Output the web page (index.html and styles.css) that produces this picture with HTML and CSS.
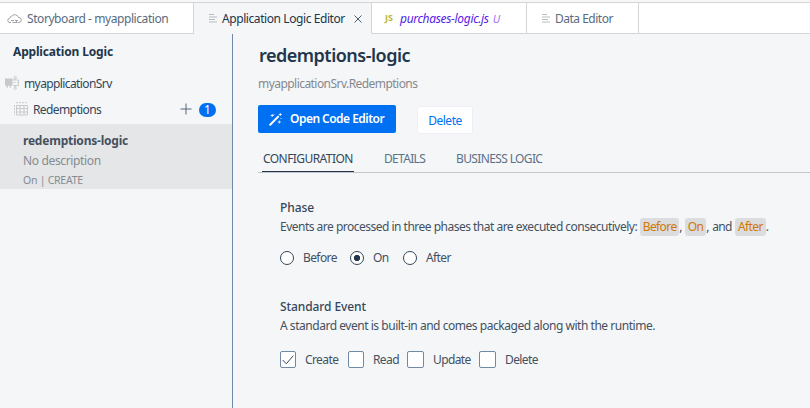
FILE: index.html
```html
<!DOCTYPE html>
<html lang="en">
<head>
<meta charset="utf-8">
<title>Application Logic Editor</title>
<link rel="stylesheet" href="styles.css">
</head>
<body>
<nav class="tabs">
  <div class="tab tab-story">
    <svg class="ico-cloud" width="15" height="11" viewBox="0 0 15 11"><path d="M4 8.500H3A2.100 2.100 0 0 1 2.800 4.300 2.200 2.200 0 0 1 4.700 2.200 3.900 3.900 0 0 1 11.500 3.500 2.500 2.500 0 0 1 12 8.500H11"/><path d="M4 6.500h3M5.500 8.500h5M8 6.500h3M9.500 6.500v2"/></svg>
    <span class="t-story">Storyboard - myapplication</span>
  </div>
  <div class="tab tab-active">
    <svg class="ico-lines" width="8" height="9" viewBox="0 0 8 9"><path d="M0 .5h5M0 3h8M0 5.500h6M0 8h8"/></svg>
    <span class="t-app">Application Logic Editor</span>
    <svg class="ico-close" width="8" height="8" viewBox="0 0 8 8"><path d="M.5.5l7 7M7.500.5l-7 7"/></svg>
  </div>
  <div class="tab tab-file">
    <span class="js">JS</span>
    <span class="t-file">purchases-logic.js</span>
    <span class="status">U</span>
  </div>
  <div class="tab tab-data">
    <svg class="ico-lines" width="8" height="9" viewBox="0 0 8 9"><path d="M0 .5h5M0 3h8M0 5.500h6M0 8h8"/></svg>
    <span class="t-data">Data Editor</span>
  </div>
  <div class="tab-rest"></div>
</nav>
<div class="workspace">
  <aside class="sidebar">
    <h2 class="side-title"><span>Application Logic</span></h2>
    <div class="row service">
      <svg class="ico-srv" width="15" height="14" viewBox="0 0 15 14"><path class="fill" d="M0 2.500h7.500v7H6v2H4.500v-2H3v2H1.500v-2H0z"/><circle cx="10.200" cy="1.700" r="1.200"/><circle cx="10.200" cy="12.200" r="1.200"/><path d="M8 4h5.500v2M8 9.500h5.500V7.500M8.500 6.500h2M10.200 3v1M10.200 9.500V11M12 6.800h2.500"/></svg>
      <span class="t-srv">myapplicationSrv</span>
    </div>
    <div class="row entity">
      <svg class="ico-grid" width="14" height="14" viewBox="0 0 14 14"><path d="M2.500 3.500h11v9.500h-11zM6 3.500V13M10 3.500V13M2.500 6.500h11M2.500 10h11"/><path class="dash" d="M2 .7h11M.5 3v10"/></svg>
      <span class="t-ent">Redemptions</span>
      <svg class="ico-plus" width="12" height="12" viewBox="0 0 12 12"><path d="M6 .5v11M.5 6h11"/></svg>
      <span class="badge">1</span>
    </div>
    <div class="item">
      <div class="item-name"><span>redemptions-logic</span></div>
      <div class="item-desc"><span>No description</span></div>
      <div class="item-meta"><span>On | CREATE</span></div>
    </div>
  </aside>
  <main class="content">
    <h1 class="title"><span>redemptions-logic</span></h1>
    <div class="path"><span>myapplicationSrv.Redemptions</span></div>
    <div class="actions">
      <button class="open"><svg class="ico-wand" width="14" height="13" viewBox="0 0 14 13"><path class="stick" d="M1.200 11.800L9.200 3.600"/><path d="M3.200 1v3M1.700 2.500h3M11.300 0v3M9.800 1.500h3M10.300 7.500v3M8.800 9h3M5 1.200v1M12 5v1"/></svg><span>Open Code Editor</span></button>
      <button class="delete"><span>Delete</span></button>
    </div>
    <div class="subtabs">
      <div class="subtab selected"><span>CONFIGURATION</span></div>
      <div class="subtab s-det"><span>DETAILS</span></div>
      <div class="subtab s-bus"><span>BUSINESS LOGIC</span></div>
    </div>
    <section class="phase">
      <h3>Phase</h3>
      <p><span class="p-phase">Events are processed in three phases that are executed consecutively:</span><code class="c-before">Before</code><span class="sep">,</span><code class="c-on">On</code><span class="sep">,</span><span class="and">and</span><code class="c-after">After</code><span class="sep">.</span></p>
      <div class="options">
        <label class="o-before"><i class="radio"></i><span>Before</span></label>
        <label class="o-on"><i class="radio checked"></i><span>On</span></label>
        <label class="o-after"><i class="radio"></i><span>After</span></label>
      </div>
    </section>
    <section class="event">
      <h3>Standard Event</h3>
      <p><span class="p-event">A standard event is built-in and comes packaged along with the runtime.</span></p>
      <div class="options">
        <label class="o-create"><i class="box"><svg width="12" height="10" viewBox="0 0 12 10"><path d="M.7 5l3.600 3.800L11.300.7"/></svg></i><span>Create</span></label>
        <label class="o-read"><i class="box"></i><span>Read</span></label>
        <label class="o-update"><i class="box"></i><span>Update</span></label>
        <label class="o-delete"><i class="box"></i><span>Delete</span></label>
      </div>
    </section>
  </main>
</div>
</body>
</html>
```
FILE: styles.css
```css
* { box-sizing: border-box; }
body { margin: 0; width: 810px; height: 408px; overflow: hidden; background: #f4f6f8; font: 12px/16px "Noto Sans", sans-serif; color: #44515f; }
h1, h2, h3, p { margin: 0; }
svg { fill: none; flex: none; }
span { white-space: nowrap; }
.tabs { display: flex; height: 34px; padding-top: 2px; background: #f7f7f8; }
.tab, .tab-rest { display: flex; align-items: center; height: 32px; padding-top: 2px; border: solid #d4d5d6; border-width: 1px 1px 1px 0; background: #fff; color: #586b80; }
.tab-rest { flex: 1; border-right: 0; }
.tab-story { width: 194px; padding-left: 7px; }
.tab-active { width: 178px; padding-left: 15px; background: #f4f6f8; border-bottom-color: #f4f6f8; color: #223548; }
.tab-file { width: 155px; padding-left: 13px; }
.tab-data { width: 112px; padding-left: 15px; }
.t-story { letter-spacing: -.43px; }
.t-app { letter-spacing: -.42px; }
.t-data { letter-spacing: -.5px; }
.ico-cloud { stroke: #a2a2a2; margin-right: 5px; }
.ico-lines { stroke: #b9bcc0; margin-right: 5px; }
.tab .ico-lines { margin-top: -2px; }
.ico-close { stroke: #4e5d6d; margin-left: auto; margin-right: 9px; margin-top: -1px; }
.js { width: 15px; margin-top: -2px; font: bold 9px/16px "Noto Sans", sans-serif; color: #b7b73b; }
.t-file { font-style: italic; letter-spacing: -.32px; color: #5722e8; }
.status { margin-left: 4px; margin-top: -1px; font-size: 11px; font-style: italic; color: #9a72f5; }
.workspace { display: flex; height: 374px; }
.sidebar { width: 233px; border-right: 1px solid #7089a5; }
.side-title { height: 37px; padding: 10px 0 0 13px; font: bold 12px/16px "Noto Sans", sans-serif; letter-spacing: -.17px; color: #22354a; }
.row { display: flex; align-items: center; height: 26px; color: #32465a; }
.service { padding-left: 5px; }
.t-srv, .t-ent { letter-spacing: -.6px; }
.ico-srv { stroke: #c9caca; margin-right: 4px; margin-top: -3px; }
.ico-srv .fill { fill: #c7c8c8; stroke: none; }
.entity { height: 27px; padding: 0 0 2px 14px; }
.ico-grid { stroke: #c9caca; margin-right: 5px; margin-top: -1px; }
.dash { stroke-dasharray: 2 1; }
.ico-plus { stroke: #55687a; margin-left: auto; margin-right: 7px; margin-top: -2px; }
.badge { width: 17px; height: 14px; border-radius: 7px; background: #0070f2; color: #fff; font-size: 12px; line-height: 14px; text-align: center; margin-right: 16px; }
.item { height: 65px; padding: 9px 0 0 23px; background: #e5e6e7; }
.item-name { height: 20px; font-weight: bold; letter-spacing: -.22px; color: #46515f; }
.item-desc { height: 20px; letter-spacing: -.35px; color: #858b92; }
.item-meta { height: 16px; font-size: 10.5px; line-height: 15px; letter-spacing: -.25px; color: #858b92; }
.content { flex: 1; padding-left: 25px; }
.title { height: 42px; padding: 9px 0 0 1px; font: 600 18px/24px "Noto Sans", sans-serif; letter-spacing: -.5px; color: #22354a; }
.path { height: 29px; letter-spacing: -.55px; color: #85898e; }
.actions { display: flex; align-items: center; gap: 22px; height: 28px; }
button { display: flex; align-items: center; border: 0; font: 12px/16px "Noto Sans", sans-serif; padding: 0; }
.open { width: 138px; height: 28px; padding-left: 11px; border-radius: 2px; background: #0070f2; color: #fff; font-weight: 600; letter-spacing: -.53px; }
.ico-wand { stroke: #fff; stroke-width: .8; margin-right: 7px; }
.stick { stroke-width: 2; stroke-linecap: round; }
.delete { width: 54px; height: 26px; padding-top: 2px; margin-top: 1px; justify-content: center; background: #fff; color: #0070f2; letter-spacing: -.5px; box-shadow: 0 0 1px #ccd3da; }
.subtabs { display: flex; height: 40px; padding-left: 4px; border-bottom: 1px solid #c4c7ca; color: #5c7188; }
.subtab { height: 39px; padding-top: 18px; margin-right: 30px; }
.selected { width: 92px; padding-left: 1px; border-bottom: 1px solid #22354a; color: #33475b; letter-spacing: -.57px; }
.s-det { width: 42px; letter-spacing: -.68px; }
.s-bus { letter-spacing: -.63px; }
.phase { padding: 27px 0 0 22px; }
h3 { height: 18px; font: 500 12px/16px "Noto Sans", sans-serif; letter-spacing: -.1px; color: #354659; }
section p { display: flex; align-items: center; height: 18px; }
.p-phase { letter-spacing: -.507px; }
.p-event { letter-spacing: -.465px; }
code { height: 18px; border-radius: 3px; background: #dbdcde; color: #d27700; font: 12px/18px "Noto Sans", sans-serif; letter-spacing: -.6px; text-align: center; }
.sep { width: 3px; }
.c-before { width: 39px; margin-left: 3px; }
.c-on { width: 21px; margin-left: 3px; }
.c-after { width: 31px; margin-left: 3px; }
.and { margin-left: 3px; letter-spacing: -.6px; }
.options { display: flex; align-items: center; height: 17px; margin-top: 16px; letter-spacing: -.6px; }
.phase .options { margin: 13px 0 1px; }
label { display: flex; align-items: center; gap: 9px; }
.radio { width: 14px; height: 14px; border: 1px solid #33475b; border-radius: 50%; background: #fff; }
.checked { background: radial-gradient(circle, #22354a 2.800px, #fff 3.500px); }
.o-before { width: 70px; }
.o-on { width: 53px; }
.event { padding: 32px 0 0 22px; }
.box { display: flex; align-items: center; justify-content: center; width: 16px; height: 17px; border: 1px solid #7089a5; border-radius: 2px; background: #fff; }
.box svg { stroke: #33475b; }
.o-create { width: 68px; }
.o-read { width: 59px; }
.o-update { width: 72px; }
.o-update .box, .o-delete .box { width: 17px; }
```
